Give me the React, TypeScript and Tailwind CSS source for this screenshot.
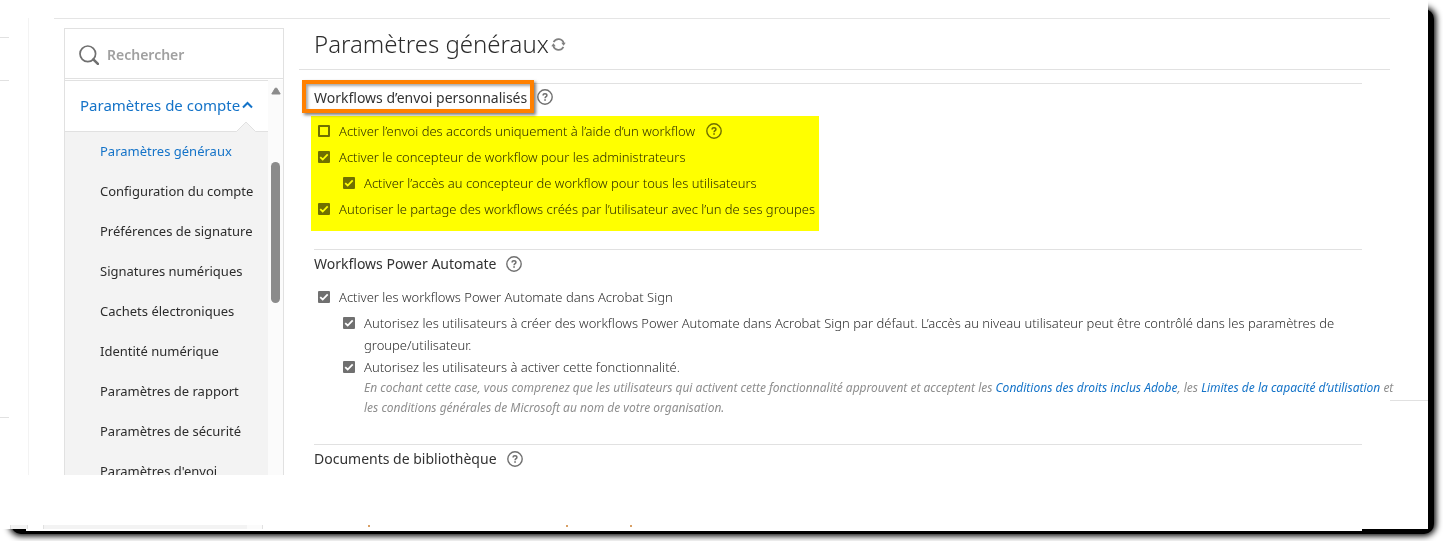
import type { ReactNode } from "react";

const accountLinks = [
  "Paramètres généraux",
  "Configuration du compte",
  "Préférences de signature",
  "Signatures numériques",
  "Cachets électroniques",
  "Identité numérique",
  "Paramètres de rapport",
  "Paramètres de sécurité",
  "Paramètres d'envoi",
];

function HelpIcon() {
  return (
    <button type="button" aria-label="Aide" className="size-4 shrink-0 text-[#707070]">
      <svg viewBox="0 0 16 16" className="block size-4" fill="none" stroke="currentColor">
        <circle cx="8" cy="8" r="7.2" strokeWidth="1.4" />
        <path d="M6.1 6.5C6.1 5.4 6.9 4.8 8 4.8s1.9.6 1.9 1.6c0 1.3-1.8 1.3-1.8 2.8" strokeWidth="1.5" />
        <path d="M7.2 11h1.7" strokeWidth="1.6" />
      </svg>
    </button>
  );
}

interface OptionProps {
  id: string;
  label: string;
  checked?: boolean;
  nested?: boolean;
  children?: ReactNode;
}

function Option({ id, label, checked = false, nested = false, children }: OptionProps) {
  return (
    <div className={`flex items-start ${nested ? "pl-[29px]" : "pl-1"}`}>
      <span className="relative mt-[5px] size-3 shrink-0">
        <input
          id={id}
          type="checkbox"
          defaultChecked={checked}
          className="peer block size-3 appearance-none rounded-[1px] border-2 border-[#707070] checked:bg-[#707070]"
        />
        <svg
          viewBox="0 0 12 12"
          className="pointer-events-none absolute inset-0 hidden size-3 peer-checked:block"
          fill="none"
          stroke="#ffffff"
          strokeWidth="1.8"
        >
          <path d="M2.2 6.1l2.5 2.4 5-5.2" />
        </svg>
      </span>
      <div className="flex min-w-0 items-center gap-[11px] pl-[9px]">
        <label htmlFor={id} className="text-[13px] leading-[22px] font-light text-[#2c2c2c]">
          {label}
        </label>
        {children}
      </div>
    </div>
  );
}

function SearchBox() {
  return (
    <div className="flex h-[50px] items-center gap-2 border-b border-[#e1e1e1] pt-[2px] pl-[14px]">
      <svg viewBox="0 0 20 20" className="size-5 shrink-0" fill="none" stroke="#707070">
        <circle cx="8.8" cy="8.8" r="7.8" strokeWidth="1.7" />
        <path d="M14.3 14.3l4.6 4.6" strokeWidth="2.6" strokeLinecap="round" />
      </svg>
      <input
        type="search"
        aria-label="Rechercher"
        placeholder="Rechercher"
        className="w-full min-w-0 text-sm font-semibold outline-none placeholder:text-[#a0a0a0]"
      />
    </div>
  );
}

function Sidebar() {
  return (
    <aside className="mt-[10px] w-[220px] shrink-0 overflow-hidden border-x border-t border-[#e1e1e1]">
      <SearchBox />
      <div className="flex pt-px">
        <nav className="min-w-0 flex-1 bg-[#f3f3f3]">
          <button
            type="button"
            className="relative flex h-[52px] w-full items-center gap-[2px] border-y border-[#e1e1e1] bg-white pb-[2px] pl-[15px] text-left text-[15px] whitespace-nowrap text-[#1473c8]"
          >
            Paramètres de compte
            <svg viewBox="0 0 11 8" className="h-2 w-[11px]" fill="none" stroke="#1473c8" strokeWidth="2">
              <path d="M1 6.5l4.5-4.5L10 6.5" />
            </svg>
            <svg viewBox="0 0 20 11" className="absolute right-3 -bottom-px h-[11px] w-5">
              <path d="M0 11L10 1l10 10z" fill="#f3f3f3" />
              <path d="M0.5 10.5L10 1l9.5 9.5" fill="none" stroke="#e1e1e1" />
            </svg>
          </button>
          <ul>
            {accountLinks.map((link, i) => (
              <li key={link}>
                <a
                  href="#"
                  className={`block pb-[2px] pl-[35px] text-[13px] leading-[38px] whitespace-nowrap ${i === 0 ? "text-[#1473c8]" : "text-[#2c2c2c]"}`}
                >
                  {link}
                </a>
              </li>
            ))}
          </ul>
        </nav>
        <div className="flex w-[15px] flex-col items-center bg-[#fbfbfb] pt-[7px]">
          <svg viewBox="0 0 10 8" className="h-2 w-[10px]">
            <path d="M4.2 1.2h1.6L9.2 7H.8z" fill="#8b8b8b" stroke="#8b8b8b" strokeLinejoin="round" />
          </svg>
          <div className="mt-[67px] h-[141px] w-[9px] rounded-full bg-[#8b8b8b]" />
        </div>
      </div>
    </aside>
  );
}

function SectionTitle({ children }: { children: ReactNode }) {
  return <h2 className="text-sm leading-5 text-[#323232]">{children}</h2>;
}

export default function App() {
  return (
    <div className="relative overflow-hidden bg-white pr-[15px] pb-[12px] font-['Noto_Sans',sans-serif]">
      {/* drop shadow behind the sheet */}
      <div className="absolute top-[9px] right-[9px] bottom-[7px] left-[11px] rounded-[10px] bg-black shadow-[0_0_6px_2px_#000]" />

      <div className="relative bg-white">
        <div className="flex h-[475px] overflow-hidden pt-[18px]">
          <div className="w-[29px] shrink-0 border-r border-[#f3f3f3] pt-[19px]">
            <div className="h-11 w-[9px] border-y border-[#e1e1e1]" />
            <div className="h-[337px] w-[9px] border-b border-[#e1e1e1]" />
          </div>

          <div className="mr-[38px] ml-[25px] flex min-w-0 flex-1 border-t border-[#e5e5e5] pl-[10px]">
            <div className="-mt-px flex min-w-0 flex-1">
              <Sidebar />

              <main className="ml-[15px] min-w-0 flex-1">
                <header className="flex h-[52px] items-center gap-[2px] border-b border-[#e1e1e1] pl-[15px]">
                  <h1 className="text-2xl leading-8 font-light text-[#2c2c2c]">Paramètres généraux</h1>
                  <button type="button" aria-label="Actualiser" className="mt-[2px] size-[15px]">
                    <svg viewBox="0 0 15 15" className="block size-[15px]" fill="none" stroke="#808080" strokeWidth="1.7">
                      <path d="M2.6 5.2A5.4 5.4 0 0 1 12.7 6.2" />
                      <path d="M12.4 9.8A5.4 5.4 0 0 1 2.3 8.8" />
                      <path d="M10.3 5.8h4.4l-2.1 3z" fill="#808080" stroke="none" />
                      <path d="M.3 9.2h4.4L2.4 6.2z" fill="#808080" stroke="none" />
                    </svg>
                  </button>
                </header>

                <div className="mt-[13px] pr-7 pl-[15px]">
                  <section className="border-t border-[#e1e1e1]">
                    <div className="-mt-1 -ml-3 flex items-center gap-[3px]">
                      <div className="relative z-10 w-[232px] border-4 border-[#ff8000] pt-1 pb-px pl-2 shadow-[2px_2px_3px_rgba(0,0,0,0.5),inset_2px_2px_3px_rgba(0,0,0,0.35)]">
                        <SectionTitle>Workflows d’envoi personnalisés</SectionTitle>
                      </div>
                      <HelpIcon />
                    </div>
                    <div className="mt-[3px] -ml-[3px] w-[508px] bg-[#ffff00]">
                      <div className="flex flex-col gap-1 pt-1 pb-[11px] pl-[3px] mix-blend-multiply">
                        <Option id="workflow-only" label="Activer l’envoi des accords uniquement à l’aide d’un workflow">
                          <HelpIcon />
                        </Option>
                        <Option id="designer-admins" label="Activer le concepteur de workflow pour les administrateurs" checked />
                        <Option id="designer-users" label="Activer l’accès au concepteur de workflow pour tous les utilisateurs" checked nested />
                        <Option id="share-groups" label="Autoriser le partage des workflows créés par l’utilisateur avec l’un de ses groupes" checked />
                      </div>
                    </div>
                  </section>

                  <section className="mt-[18px] border-t border-[#e1e1e1] pt-1">
                    <div className="flex items-center gap-[10px]">
                      <SectionTitle>Workflows Power Automate</SectionTitle>
                      <HelpIcon />
                    </div>
                    <div className="mt-3 flex flex-col">
                      <Option id="pa-enable" label="Activer les workflows Power Automate dans Acrobat Sign" checked />
                      <div className="mt-1">
                        <Option
                          id="pa-create"
                          label="Autorisez les utilisateurs à créer des workflows Power Automate dans Acrobat Sign par défaut. L’accès au niveau utilisateur peut être contrôlé dans les paramètres de groupe/utilisateur."
                          checked
                          nested
                        />
                      </div>
                      <Option id="pa-activate" label="Autorisez les utilisateurs à activer cette fonctionnalité." checked nested />
                      <p className="-mr-10 pl-[50px] text-xs leading-5 text-[#8e8e8e] italic">
                        En cochant cette case, vous comprenez que les utilisateurs qui activent cette fonctionnalité approuvent et acceptent les{" "}
                        <a href="#" className="text-[#1473c8]">Conditions des droits inclus Adobe</a>, les{" "}
                        <a href="#" className="text-[#1473c8]">Limites de la capacité d’utilisation</a> et les conditions générales de Microsoft au nom de votre organisation.
                      </p>
                    </div>
                  </section>

                  <section className="mt-[26px] border-t border-[#e1e1e1] pt-1">
                    <div className="flex items-center gap-[10px]">
                      <SectionTitle>Documents de bibliothèque</SectionTitle>
                      <HelpIcon />
                    </div>
                  </section>
                </div>
              </main>
            </div>
          </div>
          {/* tail of the page rule, right of the content */}
          <div className="mt-[382px] -ml-[38px] h-px w-[38px] shrink-0 bg-[#e1e1e1]" />
        </div>

        {/* torn-off lower edge */}
        <div className="flex h-[54px] items-end">
          <div className="ml-[10px] h-1 w-[18px] border-x border-[#e1e1e1] bg-[#f3f3f3]" />
          <div className="ml-[15px] flex h-1 w-[220px] justify-end border-x border-[#e1e1e1] bg-[#f3f3f3]">
            <div className="w-[15px] bg-[#fbfbfb]" />
          </div>
          <div className="mb-[2px] ml-[105px] h-[2px] w-[2px] bg-[#d9a066]" />
          <div className="mb-[2px] ml-[196px] h-[2px] w-[2px] bg-[#d9a066]" />
          <div className="mb-[2px] ml-[62px] h-[2px] w-[2px] bg-[#d9a066]" />
        </div>
        <div className="absolute top-full right-[66px] left-[26px] h-[2px] bg-white" />
      </div>
    </div>
  );
}
